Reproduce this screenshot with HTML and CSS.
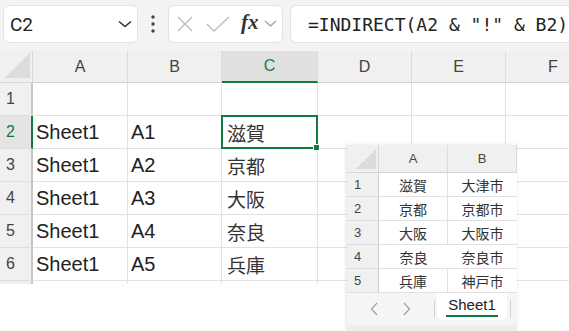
FILE: index.html
```html
<!DOCTYPE html>
<html lang="ja">

<head>
  <meta charset="UTF-8">
  <meta name="viewport" content="width=device-width, initial-scale=1.0">
  <title>INDIRECT</title>
  <link rel="stylesheet" href="styles.css">
</head>

<body>
  <div class="toolbar">
    <div class="name-box">
      <span class="name">C2</span>
      <svg class="chev" width="14" height="8" viewBox="0 0 14 8"><path d="M1 1.5 L7 6.5 L13 1.5" fill="none" stroke="#333" stroke-width="1.6"/></svg>
    </div>
    <svg class="dots" width="6" height="20" viewBox="0 0 6 20"><circle cx="3" cy="3" r="1.7" fill="#444"/><circle cx="3" cy="10" r="1.7" fill="#444"/><circle cx="3" cy="17" r="1.7" fill="#444"/></svg>
    <div class="fx-box">
      <svg width="16" height="16" viewBox="0 0 16 16"><path d="M1 1 L15 15 M15 1 L1 15" stroke="#bdbdbd" stroke-width="1.4" fill="none"/></svg>
      <svg width="24" height="16" viewBox="0 0 24 16"><path d="M1 8 L8 15 L23 1" stroke="#bdbdbd" stroke-width="1.4" fill="none"/></svg>
      <span class="fx">fx</span>
      <svg width="13" height="7" viewBox="0 0 13 7"><path d="M1 1 L6.5 6 L12 1" stroke="#9a9a9a" stroke-width="1.2" fill="none"/></svg>
    </div>
    <div class="formula">=INDIRECT(A2 &amp; "!" &amp; B2)</div>
  </div>

  <div class="sheet">
    <div class="corner"></div>
    <div class="col-head">A</div>
    <div class="col-head">B</div>
    <div class="col-head sel">C</div>
    <div class="col-head">D</div>
    <div class="col-head">E</div>
    <div class="col-head last">F</div>

    <div class="row-head">1</div>
    <div class="cell"></div><div class="cell"></div><div class="cell"></div><div class="cell"></div><div class="cell"></div><div class="cell"></div>

    <div class="row-head sel">2</div>
    <div class="cell">Sheet1</div><div class="cell">A1</div><div class="cell jp active">滋賀</div><div class="cell"></div><div class="cell"></div><div class="cell"></div>

    <div class="row-head">3</div>
    <div class="cell">Sheet1</div><div class="cell">A2</div><div class="cell jp">京都</div><div class="cell"></div><div class="cell"></div><div class="cell"></div>

    <div class="row-head">4</div>
    <div class="cell">Sheet1</div><div class="cell">A3</div><div class="cell jp">大阪</div><div class="cell"></div><div class="cell"></div><div class="cell"></div>

    <div class="row-head">5</div>
    <div class="cell">Sheet1</div><div class="cell">A4</div><div class="cell jp">奈良</div><div class="cell"></div><div class="cell"></div><div class="cell"></div>

    <div class="row-head">6</div>
    <div class="cell">Sheet1</div><div class="cell">A5</div><div class="cell jp">兵庫</div><div class="cell"></div><div class="cell"></div><div class="cell"></div>

    <div class="row-head stub"></div>
    <div class="cell stub"></div><div class="cell stub"></div><div class="cell stub"></div><div class="cell stub"></div><div class="cell stub"></div><div class="cell stub"></div>
  </div>

  <!-- 参照先シートの画面 -->
  <div class="inset">
    <div class="mini">
      <div class="corner"></div>
      <div class="col-head">A</div>
      <div class="col-head">B</div>

      <div class="row-head">1</div><div class="cell">滋賀</div><div class="cell">大津市</div>
      <div class="row-head">2</div><div class="cell">京都</div><div class="cell">京都市</div>
      <div class="row-head">3</div><div class="cell">大阪</div><div class="cell">大阪市</div>
      <div class="row-head">4</div><div class="cell">奈良</div><div class="cell">奈良市</div>
      <div class="row-head">5</div><div class="cell">兵庫</div><div class="cell">神戸市</div>
    </div>
    <div class="tabs">
      <svg class="nav" width="8" height="14" viewBox="0 0 8 14"><path d="M7 1 L1.5 7 L7 13" stroke="#a0a0a0" stroke-width="1.2" fill="none"/></svg>
      <svg class="nav" width="8" height="14" viewBox="0 0 8 14"><path d="M1 1 L6.5 7 L1 13" stroke="#a0a0a0" stroke-width="1.2" fill="none"/></svg>
      <span class="sep"></span>
      <div class="tab"><span>Sheet1</span></div>
      <span class="sep"></span>
    </div>
  </div>
</body>

</html>
```

FILE: styles.css
```css
body {
  margin: 0;
  width: 569px;
  height: 331px;
  overflow: hidden;
  background-color: #fff;
  font-family: "Liberation Sans", "Noto Sans CJK JP", sans-serif;
  color: #222;
}
.toolbar {
  display: flex;
  align-items: center;
  height: 51px;
  padding: 0 0 4px 3px;
  box-sizing: border-box;
  background-color: #f3f3f3;
}
.name-box {
  display: flex;
  align-items: center;
  justify-content: space-between;
  width: 135px;
  height: 38px;
  box-sizing: border-box;
  padding: 0 5px 0 6px;
  background-color: #fff;
  border: 1px solid #e3e3e3;
  border-radius: 6px;
}
.name {
  font-family: Roboto, "Liberation Sans", sans-serif;
  font-size: 19px;
  color: #222;
  padding-top: 2px;
}
.dots {
  margin: 0 12px 0 12px;
}
.fx-box {
  display: flex;
  align-items: center;
  gap: 0;
  width: 115px;
  height: 38px;
  box-sizing: border-box;
  padding-left: 8px;
  background-color: #fff;
  border: 1px solid #e3e3e3;
  border-radius: 6px;
}
.fx-box svg:nth-child(1) {
  margin-right: 13px;
}
.fx-box svg:nth-child(2) {
  margin-right: 11px;
}
.fx {
  font-family: "Liberation Serif", serif;
  font-style: italic;
  font-weight: bold;
  font-size: 21px;
  color: #333;
  margin-right: 5px;
  margin-top: -3px;
}
.formula {
  flex: 1;
  height: 38px;
  margin-left: 7px;
  box-sizing: border-box;
  padding: 8px 0 0 17px;
  background-color: #fff;
  border: 1px solid #e3e3e3;
  border-right: none;
  border-radius: 6px 0 0 6px;
  font-family: "DejaVu Sans Mono", monospace;
  font-size: 18px;
  color: #222;
  white-space: nowrap;
  overflow: hidden;
}

/* メインのシート */
.sheet {
  display: grid;
  grid-template-columns: 33px 95px 94px 96px 94px 94px 1fr;
  grid-template-rows: 32px repeat(6, 33px) 3px;
}
.corner {
  position: relative;
  background-color: #f0f0f0;
  border-right: 1px solid #d6d6d6;
  border-bottom: 1px solid #d6d6d6;
}
.corner::after {
  content: "";
  position: absolute;
  right: 2px;
  bottom: 4px;
  width: 25px;
  height: 25px;
  background: linear-gradient(to bottom right, transparent 50%, #dcdcdc 50%);
}
.col-head {
  display: flex;
  align-items: center;
  justify-content: center;
  background-color: #f0f0f0;
  border-right: 1px solid #dcdcdc;
  border-bottom: 1px solid #d2d2d2;
  font-size: 16px;
  color: #444;
}
.col-head.last {
  justify-content: flex-start;
  padding-left: 42px;
  border-right: none;
}
.col-head.sel {
  background-color: #e0e0e0;
  color: #107c41;
  border-bottom: 2px solid #107c41;
}
.row-head {
  display: flex;
  align-items: center;
  padding-left: 6px;
  background-color: #f0f0f0;
  border-right: 2px solid #c6c6c6;
  border-bottom: 1px solid #dedede;
  font-size: 16px;
  color: #444;
}
.row-head.sel {
  background-color: #e4e4e4;
  color: #107c41;
  border-right-color: #107c41;
}
.cell {
  display: flex;
  align-items: center;
  padding-left: 3px;
  border-right: 1px solid #e1e1e1;
  border-bottom: 1px solid #e1e1e1;
  font-size: 20px;
  color: #222;
  white-space: nowrap;
}
.cell:nth-child(7n) {
  border-right: none;
}
.cell.jp {
  padding-left: 5px;
  font-size: 19px;
  color: #333;
}
.cell.active {
  position: relative;
}
.cell.active::before {
  content: "";
  position: absolute;
  left: -1px;
  top: -1px;
  right: -1px;
  bottom: -1px;
  border: 2px solid #107c41;
}
.cell.active::after {
  content: "";
  position: absolute;
  right: -3px;
  bottom: -3px;
  width: 5px;
  height: 5px;
  background-color: #107c41;
  border: 1px solid #fff;
}
.row-head.stub,
.cell.stub {
  border-bottom: none;
  padding: 0;
}

/* 参照先のシート */
.inset {
  position: absolute;
  left: 347px;
  top: 145px;
  width: 170px;
  height: 186px;
  background-color: #ededed;
  box-shadow: -1px 0 4px rgba(0, 0, 0, .12);
}
.mini {
  display: grid;
  grid-template-columns: 32px 69px 69px;
  grid-template-rows: 28px repeat(5, 24px);
  background-color: #fff;
}
.mini .corner::after {
  right: 2px;
  bottom: 3px;
  width: 20px;
  height: 20px;
}
.mini .col-head {
  font-size: 13px;
  padding-top: 0;
}
.mini .row-head {
  font-size: 13px;
  padding-left: 7px;
  border-right: 1px solid #cfcfcf;
}
.mini .cell {
  justify-content: center;
  padding-left: 0;
  font-size: 14px;
  color: #333;
}
.mini .cell:nth-child(3n) {
  border-right: none;
}
.tabs {
  display: flex;
  align-items: flex-start;
  height: 32px;
  background-color: #f5f5f5;
}
.nav {
  margin-top: 9px;
}
.nav:first-child {
  margin-left: 23px;
  margin-right: 25px;
}
.sep {
  width: 1px;
  height: 18px;
  margin-top: 7px;
  margin-left: 23px;
  background-color: #cfcfcf;
}
.tab {
  width: 70px;
  height: 27px;
  margin-left: 2px;
  display: flex;
  justify-content: center;
  background-color: #fff;
  border-radius: 0 0 6px 6px;
}
.tab span {
  font-size: 15px;
  color: #222;
  height: 22px;
  line-height: 24px;
  padding: 0 2px;
  border-bottom: 2px solid #107c41;
}
.tab + .sep {
  margin-left: 3px;
}
```
